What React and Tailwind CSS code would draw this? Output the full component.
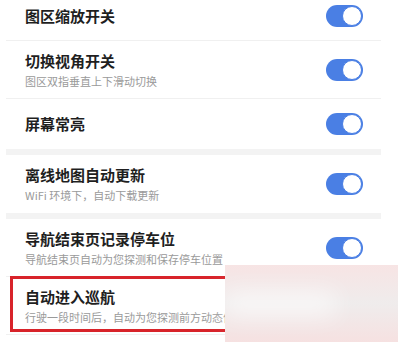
import React from "react";

const rows = [
    { group: 1, title: "图区缩放开关" },
    { group: 1, title: "切换视角开关", sub: "图区双指垂直上下滑动切换" },
    { group: 1, title: "屏幕常亮" },
    { group: 2, title: "离线地图自动更新", sub: "WiFi 环境下，自动下载更新" },
    { group: 3, title: "导航结束页记录停车位", sub: "导航结束页自动为您探测和保存停车位置" },
    { group: 3, title: "自动进入巡航", sub: "行驶一段时间后，自动为您探测前方动态信息" },
];

function Toggle() {
    return (
        <div className="w-[37px] h-[22px] rounded-full bg-[#4a7fe4] flex items-center justify-end pr-[1px] shrink-0">
            <div className="w-[20px] h-[20px] rounded-full bg-white border-[1.5px] border-[#4a7fe4]" />
        </div>
    );
}

function Row({ title, sub, last }) {
    return (
        <div className={`flex items-center justify-between pl-[19px] pr-[18px] ${sub ? "h-[58px]" : "h-[50px]"} ${last ? "" : "border-b border-[#f0f0f0]"}`}>
            <div className="flex flex-col gap-[2px]">
                <div className="text-[15px] leading-[20px] font-semibold text-[#1f1f1f]">{title}</div>
                {sub && <div className="text-[11px] leading-[16px] text-[#9a9a9a]">{sub}</div>}
            </div>
            <Toggle />
        </div>
    );
}

export default function App() {
    const groups = [1, 2, 3];
    return (
        <div
            className="relative w-[398px] h-[342px] overflow-hidden bg-white"
            style={{ fontFamily: '"Noto Sans CJK SC", "Noto Sans", sans-serif' }}
        >
            <div className="ml-[6px] w-[375px] -mt-[9px] bg-[#f3f3f3] flex flex-col gap-[6px]">
                {groups.map((g) => {
                    const items = rows.filter((r) => r.group === g);
                    return (
                        <div key={g} className="bg-white">
                            {items.map((r, i) => (
                                <Row key={r.title} title={r.title} sub={r.sub} last={i === items.length - 1 && g !== 3} />
                            ))}
                        </div>
                    );
                })}
            </div>

            {/* red highlight box */}
            <div className="absolute left-[10px] top-[276px] w-[372px] h-[56px] border-[3.5px] border-[#d8232a]" />

            {/* blurred patch */}
            <div className="absolute left-[225px] top-[265px] w-[173px] h-[77px] bg-gradient-to-b from-[#f7e4e4] via-[#efecec] to-[#f6e1e1]">
                <div className="absolute left-0 top-[28px] w-[110px] h-[22px] bg-white/70 blur-md" />
            </div>
        </div>
    );
}
